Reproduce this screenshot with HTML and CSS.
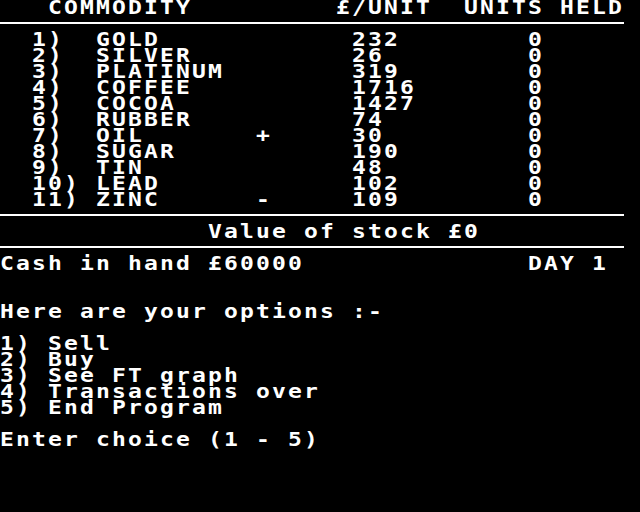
FILE: index.html
```html
<!DOCTYPE html>
<html>
<head>
<meta charset="utf-8">
<link rel="stylesheet" href="styles.css">
</head>
<body>
<div class="screen">
  <div class="row">   COMMODITY         £/UNIT  UNITS HELD</div>
  <div class="rule"></div>
  <div class="row">  1)  GOLD            232        0</div>
  <div class="row">  2)  SILVER          26         0</div>
  <div class="row">  3)  PLATINUM        319        0</div>
  <div class="row">  4)  COFFEE          1716       0</div>
  <div class="row">  5)  COCOA           1427       0</div>
  <div class="row">  6)  RUBBER          74         0</div>
  <div class="row">  7)  OIL       +     30         0</div>
  <div class="row">  8)  SUGAR           190        0</div>
  <div class="row">  9)  TIN             48         0</div>
  <div class="row">  10) LEAD            102        0</div>
  <div class="row">  11) ZINC      -     109        0</div>
  <div class="rule"></div>
  <div class="row">             Value of stock £0</div>
  <div class="rule"></div>
  <div class="row">Cash in hand £60000              DAY 1</div>
  <div class="row"> </div>
  <div class="row"> </div>
  <div class="row">Here are your options :-</div>
  <div class="row"> </div>
  <div class="row">1) Sell</div>
  <div class="row">2) Buy</div>
  <div class="row">3) See FT graph</div>
  <div class="row">4) Transactions over</div>
  <div class="row">5) End Program</div>
  <div class="row"> </div>
  <div class="row">Enter choice (1 - 5)</div>
</div>
</body>
</html>
```
FILE: styles.css
```css
html, body {
  margin: 0;
  padding: 0;
  background: #000;
}
.screen {
  width: 640px;
  height: 512px;
  background: #000;
  color: #fff;
  font-family: "DejaVu Sans Mono", "Liberation Mono", monospace;
  font-weight: bold;
  font-size: 20px;
  letter-spacing: 1.87px;
  overflow: hidden;
}
.row {
  height: 16px;
  line-height: 16px;
  white-space: pre;
  transform: translateY(-1px) scaleX(1.15);
  transform-origin: 0 0;
}
.rule {
  width: 624px;
  height: 2px;
  background: #fff;
  margin: 6px 0 8px 0;
}
```
